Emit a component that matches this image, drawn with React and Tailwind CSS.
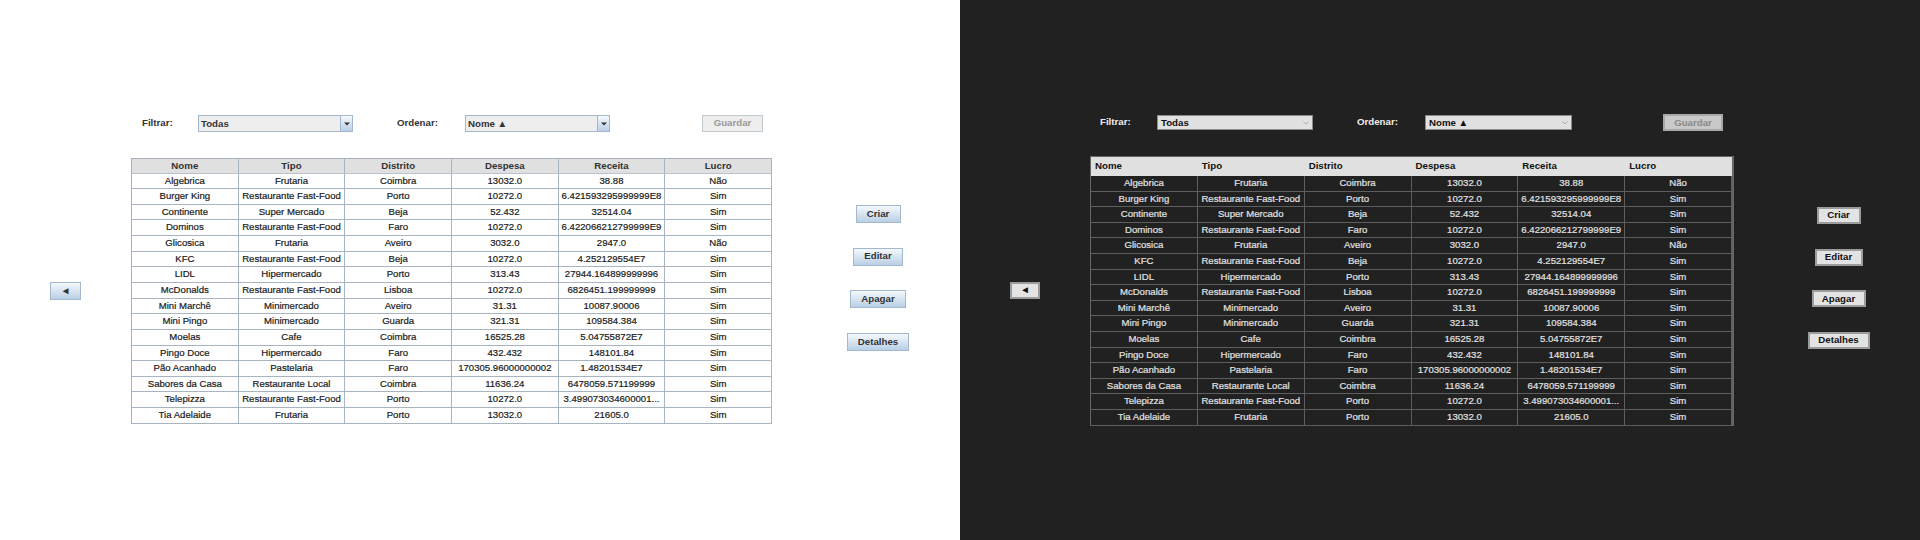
import React from 'react';

const columns = ['Nome', 'Tipo', 'Distrito', 'Despesa', 'Receita', 'Lucro'];

const rows = [
    ['Algebrica', 'Frutaria', 'Coimbra', '13032.0', '38.88', 'Não'],
    ['Burger King', 'Restaurante Fast-Food', 'Porto', '10272.0', '6.421593295999999E8', 'Sim'],
    ['Continente', 'Super Mercado', 'Beja', '52.432', '32514.04', 'Sim'],
    ['Dominos', 'Restaurante Fast-Food', 'Faro', '10272.0', '6.422066212799999E9', 'Sim'],
    ['Glicosica', 'Frutaria', 'Aveiro', '3032.0', '2947.0', 'Não'],
    ['KFC', 'Restaurante Fast-Food', 'Beja', '10272.0', '4.252129554E7', 'Sim'],
    ['LIDL', 'Hipermercado', 'Porto', '313.43', '27944.164899999996', 'Sim'],
    ['McDonalds', 'Restaurante Fast-Food', 'Lisboa', '10272.0', '6826451.199999999', 'Sim'],
    ['Mini Marchê', 'Minimercado', 'Aveiro', '31.31', '10087.90006', 'Sim'],
    ['Mini Pingo', 'Minimercado', 'Guarda', '321.31', '109584.384', 'Sim'],
    ['Moelas', 'Cafe', 'Coimbra', '16525.28', '5.04755872E7', 'Sim'],
    ['Pingo Doce', 'Hipermercado', 'Faro', '432.432', '148101.84', 'Sim'],
    ['Pão Acanhado', 'Pastelaria', 'Faro', '170305.96000000002', '1.48201534E7', 'Sim'],
    ['Sabores da Casa', 'Restaurante Local', 'Coimbra', '11636.24', '6478059.571199999', 'Sim'],
    ['Telepizza', 'Restaurante Fast-Food', 'Porto', '10272.0', '3.499073034600001...', 'Sim'],
    ['Tia Adelaide', 'Frutaria', 'Porto', '13032.0', '21605.0', 'Sim'],
];

const actions = [
    { label: 'Criar', light: 'w-[45px]', dark: 'w-[44px]' },
    { label: 'Editar', light: 'w-[50px]', dark: 'w-[48px]' },
    { label: 'Apagar', light: 'w-[56px]', dark: 'w-[54px]' },
    { label: 'Detalhes', light: 'w-[62px]', dark: 'w-[62px]' },
];

const cellText = 'text-center text-[9.6px] whitespace-nowrap [-webkit-text-stroke:0.2px_currentColor]';
const oceanButton = 'h-[18px] flex items-center justify-center border border-[#a3b8cc] bg-gradient-to-b from-[#f5f9fd] to-[#b9cfe5] text-[9.7px] font-bold text-[#333]';
const flatButton = 'h-[17px] flex items-center justify-center border-2 border-[#9c9c9c] bg-[#e3e3e3] text-[9.7px] font-bold text-[#111]';

const LightCombo = ({ value, width }) => (
    <div className={`${width} h-[17px] flex border border-[#a3b8cc] bg-[#eeeeee]`}>
        <span className="flex-1 pl-[2px] text-[9.7px] leading-[15px] font-bold text-[#333]">{value}</span>
        <span className="w-[12px] flex items-center justify-center border-l border-[#a3b8cc] bg-gradient-to-b from-[#f5f9fd] to-[#b9cfe5]">
            <svg width="6" height="4" viewBox="0 0 6 4"><path d="M0 0.5h6L3 3.5z" fill="#333" /></svg>
        </span>
    </div>
);

const DarkCombo = ({ value, width }) => (
    <div className={`${width} h-[15px] flex items-center border border-[#8a8a8a] bg-[#e1e1e1]`}>
        <span className="flex-1 pl-[3px] text-[9.7px] leading-[13px] font-bold text-[#111]">{value}</span>
        <svg className="mr-[3px]" width="6" height="4" viewBox="0 0 6 4" fill="none">
            <path d="M0.5 0.5L3 3L5.5 0.5" stroke="#9a9a9a" strokeWidth="0.8" />
        </svg>
    </div>
);

const LightPane = () => (
    <div className="flex w-[960px] h-[540px] bg-white">
        <div className="w-[131px] pl-[50px] pt-[282px]">
            <button className={`${oceanButton} w-[31px]`}>◄</button>
        </div>
        <div className="w-[641px] pt-[115px]">
            <div className="flex items-center h-[17px]">
                <span className="ml-[11px] w-[56px] text-[9.7px] font-bold text-[#333]">Filtrar:</span>
                <LightCombo value="Todas" width="w-[155px]" />
                <span className="ml-[44px] w-[68px] text-[9.7px] font-bold text-[#333]">Ordenar:</span>
                <LightCombo value="Nome ▲" width="w-[145px]" />
                <button className="ml-[92px] w-[61px] h-[17px] border border-[#c0c8d0] bg-[#eeeeee] text-[9.7px] font-bold text-[#999]">Guardar</button>
            </div>
            <div className="mt-[26px] border-l border-t border-[#a9b1bc]">
                <div className="grid grid-cols-6 h-[14.5px] bg-[#e0e0e0] border-b border-[#b8c4d0]">
                    {columns.map((col) => (
                        <div key={col} className="border-r border-[#a9b4c2] text-center text-[9.7px] leading-[14px] font-bold text-[#333]">{col}</div>
                    ))}
                </div>
                {rows.map((row) => (
                    <div key={row[0]} className="grid grid-cols-6 h-[15.65px] border-b border-[#a9b4c2]">
                        {row.map((cell, i) => (
                            <div key={i} className={`border-r border-[#a9b4c2] leading-[13px] text-[#1a1a1a] ${cellText}`}>{cell}</div>
                        ))}
                    </div>
                ))}
            </div>
        </div>
        <div className="flex-1 flex flex-col items-center gap-[24.7px] pl-[24px] pt-[205px]">
            {actions.map((a) => (
                <button key={a.label} className={`${oceanButton} ${a.light}`}>{a.label}</button>
            ))}
        </div>
    </div>
);

const DarkPane = () => (
    <div className="flex w-[960px] h-[540px] bg-[#212121]">
        <div className="w-[130px] pl-[50px] pt-[282px]">
            <button className={`${flatButton} w-[30px]`}>◄</button>
        </div>
        <div className="w-[644px] pt-[114px]">
            <div className="flex items-center h-[17px]">
                <span className="ml-[10px] w-[57px] text-[9.7px] font-bold text-[#eeeeee]">Filtrar:</span>
                <DarkCombo value="Todas" width="w-[156px]" />
                <span className="ml-[44px] w-[68px] text-[9.7px] font-bold text-[#eeeeee]">Ordenar:</span>
                <DarkCombo value="Nome ▲" width="w-[147px]" />
                <button className="ml-[91px] w-[60px] h-[17px] border-2 border-[#a8a8a8] bg-[#c9c9c9] text-[9.7px] font-bold text-[#8a8a8a]">Guardar</button>
            </div>
            <div className="mt-[25px] border-l border-r-2 border-t border-[#666666]">
                <div className="grid grid-cols-6 h-[19px] bg-[#e0e0e0]">
                    {columns.map((col) => (
                        <div key={col} className="pl-[4px] text-[9.7px] leading-[18px] font-bold text-[#111]">{col}</div>
                    ))}
                </div>
                {rows.map((row) => (
                    <div key={row[0]} className="grid grid-cols-6 h-[15.6px] border-b border-[#5e5e5e]">
                        {row.map((cell, i) => (
                            <div key={i} className={`border-r border-[#5e5e5e] leading-[14px] text-[#e2e2e2] ${cellText}`}>{cell}</div>
                        ))}
                    </div>
                ))}
            </div>
        </div>
        <div className="flex-1 flex flex-col items-center gap-[24.7px] pl-[23px] pt-[207px]">
            {actions.map((a) => (
                <button key={a.label} className={`${flatButton} ${a.dark}`}>{a.label}</button>
            ))}
        </div>
    </div>
);

const App = () => {
    return (
        <div className="flex w-[1920px] h-[540px] overflow-hidden font-['Liberation_Sans',sans-serif]">
            <LightPane />
            <DarkPane />
        </div>
    );
};

export default App;
